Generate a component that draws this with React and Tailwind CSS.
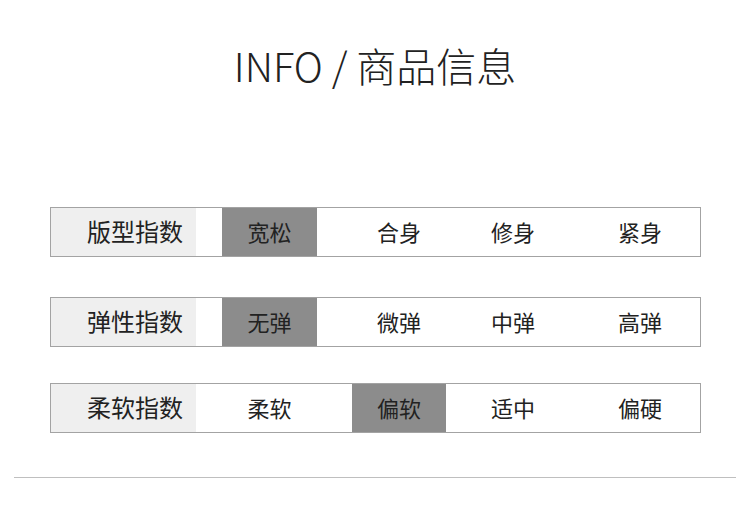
export default function App() {
  const rows = [
    { label: "版型指数", opts: ["宽松", "合身", "修身", "紧身"], active: 0, mt: "mt-[121px]" },
    { label: "弹性指数", opts: ["无弹", "微弹", "中弹", "高弹"], active: 0, mt: "mt-[40px]" },
    { label: "柔软指数", opts: ["柔软", "偏软", "适中", "偏硬"], active: 1, mt: "mt-[36px]" },
  ];
  const font = { fontFamily: '"Noto Sans CJK SC", "Noto Sans", sans-serif' };
  return (
    <div className="w-[750px] h-[522px] bg-white text-[#222]" style={font}>
      <div className="pt-[40px] h-[86px] flex justify-center">
        <div className="text-[40px] leading-[50px] font-light tracking-[0px]">INFO / 商品信息</div>
      </div>
      {rows.map((r, i) => (
        <div
          key={i}
          className={`${r.mt} ml-[50px] w-[651px] h-[50px] border border-[#a3a3a3] flex items-stretch`}
        >
          <div className="w-[145px] bg-[#efefef] flex items-center justify-end pr-[13px] pb-[3px] text-[24px]">
            {r.label}
          </div>
          <div className="w-[26px]" />
          <Cell text={r.opts[0]} active={r.active === 0} w="w-[95px]" />
          <div className="w-[35px]" />
          <Cell text={r.opts[1]} active={r.active === 1} w="w-[94px]" />
          <div className="w-[20px]" />
          <Cell text={r.opts[2]} active={r.active === 2} w="w-[94px]" />
          <div className="w-[33px]" />
          <Cell text={r.opts[3]} active={r.active === 3} w="w-[94px]" />
        </div>
      ))}
      <div className="mt-[44px] mx-[14px] h-px bg-[#bfbfbf]" />
    </div>
  );
}

function Cell({ text, active, w }) {
  return (
    <div
      className={`${w} flex items-center justify-center pb-[2px] text-[22px] ${
        active ? "bg-[#8c8c8c]" : ""
      }`}
    >
      {text}
    </div>
  );
}
